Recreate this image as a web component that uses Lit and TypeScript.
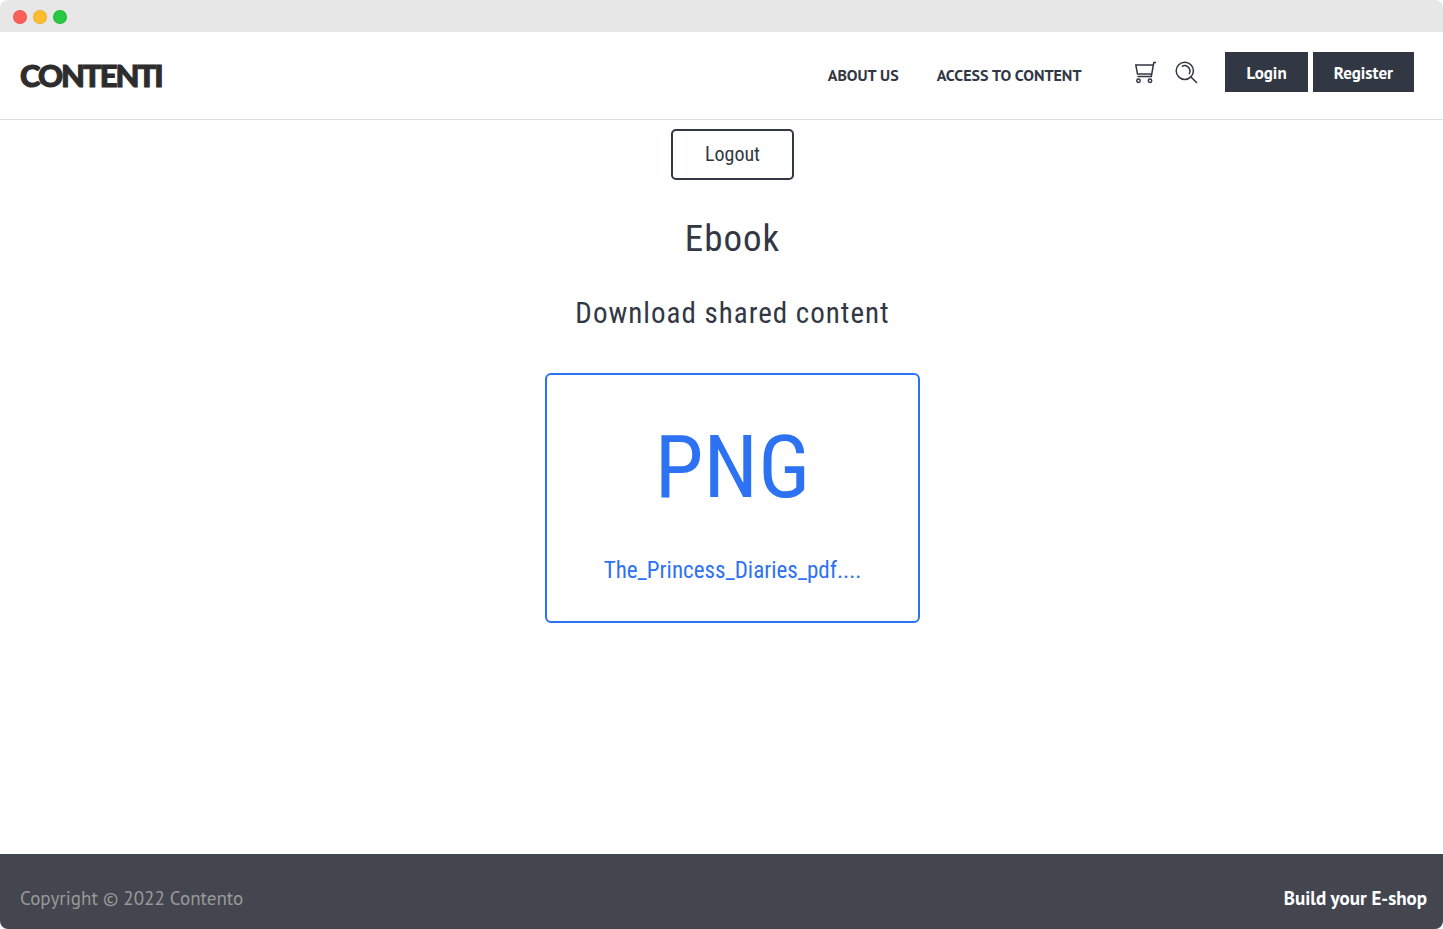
import { LitElement, html, css } from "lit";
import { customElement } from "lit/decorators.js";

@customElement("app-root")
export class AppRoot extends LitElement {
  static styles = css`
    :host {
      --ink: #323744;
      --accent: #2d72f2;
      --body-font: "PT Sans", "Noto Sans", sans-serif;
      --title-font: "Roboto Condensed", "Liberation Sans Narrow", Roboto, sans-serif;
      display: flex;
      flex-direction: column;
      min-height: 100vh;
      overflow: hidden;
      border-radius: 8px;
      background: #fff;
      color: var(--ink);
      font-family: var(--body-font);
    }
    a {
      color: inherit;
      text-decoration: none;
    }
    .chrome {
      display: flex;
      align-items: center;
      gap: 6px;
      height: 32px;
      padding: 2px 13px 0;
      box-sizing: border-box;
      background: #e7e7e7;
    }
    .dot {
      width: 14px;
      height: 14px;
      border: 1px solid rgb(0 0 0 / 8%);
      border-radius: 50%;
      box-sizing: border-box;
    }
    .red { background: #ff5f57; }
    .yellow { background: #ffbd2e; }
    .green { background: #28c940; }
    .header {
      display: flex;
      align-items: center;
      height: 87px;
      padding: 0 29px 0 20px;
      border-bottom: 1px solid #dedede;
    }
    .logo {
      margin: 0 auto 2px 0;
      color: #2d2d2d;
      font: 900 31px/40px Lato, sans-serif;
      letter-spacing: -2px;
      -webkit-text-stroke: 1px #2d2d2d;
    }
    .nav {
      display: flex;
      gap: 38px;
      margin-bottom: 2px;
      font-size: 16px;
      line-height: 20px;
      font-weight: 700;
    }
    .tools {
      display: flex;
      gap: 18px;
      margin: 0 27px 6px 53px;
    }
    .icon {
      display: block;
      padding: 0;
      border: 0;
      background: none;
      color: inherit;
    }
    .icon svg {
      display: block;
      fill: none;
      stroke: currentColor;
    }
    .account {
      display: flex;
      gap: 5px;
      margin-bottom: 7px;
    }
    .solid {
      height: 40px;
      padding: 2px 21px 0;
      border: 0;
      background: var(--ink);
      color: #fff;
      font: 700 17px/24px var(--body-font);
    }
    .content {
      display: flex;
      flex: 1;
      flex-direction: column;
      align-items: center;
      padding: 9px 0 24px 22px;
      font-family: var(--title-font);
    }
    .logout {
      padding: 11px 32px 12px;
      border: 2px solid var(--ink);
      border-radius: 5px;
      background: #fff;
      color: inherit;
      font: 400 20px/24px var(--title-font);
    }
    h1, h2 {
      margin: 0;
      font-weight: 400;
      letter-spacing: 1px;
    }
    h1 {
      margin-top: 35px;
      font-size: 37px;
      line-height: 48px;
    }
    h2 {
      margin-top: 30px;
      font-size: 29px;
      line-height: 40px;
    }
    .file {
      display: flex;
      flex-direction: column;
      align-items: center;
      box-sizing: border-box;
      width: 375px;
      max-width: 100%;
      margin-top: 40px;
      padding: 40px 24px 35px;
      border: 2px solid var(--accent);
      border-radius: 6px;
      color: var(--accent);
    }
    .type {
      font-size: 88px;
      line-height: 104px;
    }
    .name {
      margin-top: 37px;
      font-size: 23px;
      line-height: 30px;
    }
    .footer {
      display: flex;
      align-items: center;
      justify-content: space-between;
      padding: 32px 16px 19px 20px;
      background: #43464f;
      color: #999;
      font-size: 19px;
      line-height: 24px;
    }
    .shop {
      color: #fff;
      font-weight: 700;
    }
  `;

  render() {
    return html`
      <div class="chrome">
        <span class="dot red"></span>
        <span class="dot yellow"></span>
        <span class="dot green"></span>
      </div>
      <header class="header">
        <a class="logo" href="#">CONTENTI</a>
        <nav class="nav">
          <a href="#about">ABOUT US</a>
          <a href="#access">ACCESS TO CONTENT</a>
        </nav>
        <div class="tools">
          <button class="icon" aria-label="Cart">
            <svg width="23" height="23" viewBox="0 0 23 23" stroke-width="1.5">
              <path d="M22 1.5H19.8L17.3 15.5H3.5M19.2 4H1.8L3.5 13H17.5" />
              <circle cx="4.5" cy="19.8" r="1.7" />
              <circle cx="16" cy="19.8" r="1.7" />
            </svg>
          </button>
          <button class="icon" aria-label="Search">
            <svg width="23" height="23" viewBox="0 0 23 23" stroke-width="1.5">
              <circle cx="9.8" cy="9.8" r="8.6" />
              <path d="M16 16L22 22M7 5.5C11 3 15.2 6.5 15 10.5Q14.8 12 14 13.2" />
            </svg>
          </button>
        </div>
        <div class="account">
          <button class="solid">Login</button>
          <button class="solid">Register</button>
        </div>
      </header>
      <main class="content">
        <button class="logout">Logout</button>
        <h1>Ebook</h1>
        <h2>Download shared content</h2>
        <a class="file" href="#download">
          <span class="type">PNG</span>
          <span class="name">The_Princess_Diaries_pdf....</span>
        </a>
      </main>
      <footer class="footer">
        <span>Copyright © 2022 Contento</span>
        <a class="shop" href="#shop">Build your E-shop</a>
      </footer>
    `;
  }
}
